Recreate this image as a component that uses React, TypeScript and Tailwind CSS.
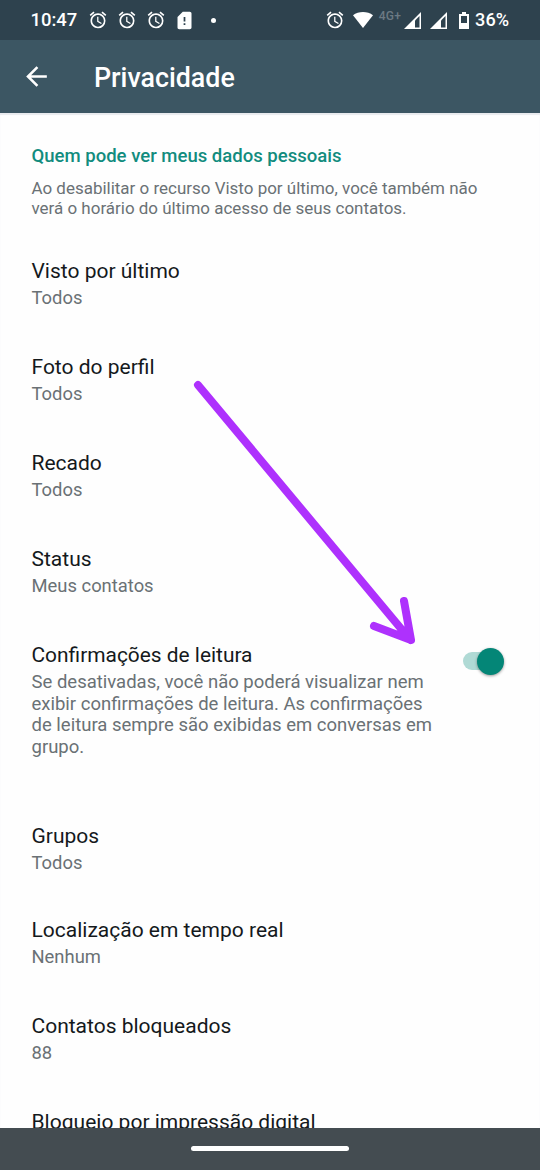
import { MdAlarm, MdArrowBack, MdSdCardAlert } from 'react-icons/md'

interface SettingItem {
  title: string
  value: string
}

const visibilityItems: SettingItem[] = [
  { title: 'Visto por último', value: 'Todos' },
  { title: 'Foto do perfil', value: 'Todos' },
  { title: 'Recado', value: 'Todos' },
  { title: 'Status', value: 'Meus contatos' }
]

const otherItems: SettingItem[] = [
  { title: 'Localização em tempo real', value: 'Nenhum' },
  { title: 'Contatos bloqueados', value: '88' }
]

function SignalIcon() {
  return (
    <svg viewBox="0 0 17 17" className="size-[17px] shrink-0">
      <path d="M0 17 17 0v17z" fill="currentColor" />
      <path d="M11 8.500 15.500 4v11.500H11z" fill="#2e424e" />
    </svg>
  )
}

function StatusBar() {
  return (
    <div className="flex h-10 shrink-0 items-center bg-[#2e424e] pr-[31px] pl-[30.5px] text-white">
      <span className="w-[57.5px] text-[18.4px] leading-5 font-medium">10:47</span>
      <div className="flex items-center gap-[9px]">
        <MdAlarm className="size-5" />
        <MdAlarm className="size-5" />
        <MdAlarm className="size-5" />
        <MdSdCardAlert className="-ml-[1px] size-[21px]" />
        <span className="ml-[7px] size-[5px] rounded-full bg-white" />
      </div>
      <div className="ml-auto flex items-center">
        <MdAlarm className="mr-2 size-5" />
        <svg viewBox="0 0 20 16" className="h-4 w-5">
          <path d="M0 3.200C5.500-1 14.500-1 20 3.200L10 16z" fill="currentColor" />
        </svg>
        <span className="mr-[3px] ml-1.5 self-start text-[12px] leading-[13px] font-medium tracking-[0.2px] text-[#6c7983]">
          4G+
        </span>
        <SignalIcon />
        <span className="w-[9px]" />
        <SignalIcon />
        <svg viewBox="0 0 10 17" className="mr-[6px] ml-3 h-[17px] w-2.5">
          <path d="M3 0h4v2h3v15H0V2h3z" fill="currentColor" />
          <path d="M2 4h6v7H2z" fill="#2e424e" />
        </svg>
        <span className="text-[18.1px] leading-5 font-medium">36%</span>
      </div>
    </div>
  )
}

function SettingRow({ title, value }: SettingItem) {
  return (
    <div className="h-24">
      <h2 className="text-[21px] leading-7 text-[#14191c]">{title}</h2>
      <p className="text-[18.4px] leading-[26px] text-[#6a7175]">{value}</p>
    </div>
  )
}

function Toggle() {
  return (
    <div role="switch" aria-checked="true" className="mt-[6.5px] flex h-[27px] w-[42px] items-center">
      <div className="flex h-[18px] w-[38px] items-center justify-end rounded-full bg-[#b0dad5]">
        <div className="-mr-[3.5px] size-[27px] shrink-0 rounded-full bg-[#048677] shadow-[0_1px_3px_rgba(0,0,0,0.4)]" />
      </div>
    </div>
  )
}

// Hand-drawn pointer from the profile photo row to the switch
function Pointer() {
  return (
    <svg viewBox="0 0 540 1170" className="pointer-events-none absolute inset-0 h-[1170px] w-[540px]">
      <path
        d="M198 385 410.500 640M404 601l7 39-37-14"
        fill="none"
        stroke="#ae31fd"
        strokeWidth="8"
        strokeLinecap="round"
        strokeLinejoin="round"
      />
    </svg>
  )
}

export default function App() {
  return (
    <div className="relative flex h-[1170px] w-[540px] flex-col overflow-hidden bg-[#fefefe] font-['Roboto',sans-serif]">
      <StatusBar />
      <header className="flex h-[73px] shrink-0 items-center bg-[#3c5663] pl-[21px] text-white">
        <MdArrowBack className="size-[31px]" />
        <h1 className="ml-[42px] pt-[2px] text-[26.8px] leading-8 font-medium">Privacidade</h1>
      </header>

      <main className="min-h-0 flex-1 overflow-hidden pl-[31.5px] shadow-[inset_0_2px_1px_#e8eaee]">
        <h2 className="mt-[31px] text-[18.55px] leading-6 font-medium text-[#128c7e]">
          Quem pode ver meus dados pessoais
        </h2>
        <p className="mt-[10px] text-[16.98px] leading-5 text-[#6a7175]">
          Ao desabilitar o recurso Visto por último, você também não
          <br />
          verá o horário do último acesso de seus contatos.
        </p>

        <div className="mt-[39px]">
          {visibilityItems.map((item) => (
            <SettingRow key={item.title} {...item} />
          ))}
        </div>

        <div className="flex h-[181px] justify-between pr-[35.5px]">
          <div>
            <h2 className="text-[20.9px] leading-7 text-[#14191c]">Confirmações de leitura</h2>
            <p className="mt-[3px] text-[18.5px] leading-[21.6px] text-[#6a7175]">
              Se desativadas, você não poderá visualizar nem
              <br />
              exibir confirmações de leitura. As confirmações
              <br />
              de leitura sempre são exibidas em conversas em
              <br />
              grupo.
            </p>
          </div>
          <Toggle />
        </div>

        <div className="h-[94px]">
          <SettingRow title="Grupos" value="Todos" />
        </div>
        {otherItems.map((item) => (
          <SettingRow key={item.title} {...item} />
        ))}
        <SettingRow title="Bloqueio por impressão digital" value="" />
      </main>

      <nav className="flex h-[42px] shrink-0 items-center justify-center bg-[#444c51] pb-[2px]">
        <span className="h-[5px] w-[158px] rounded-full bg-white" />
      </nav>
      <Pointer />
    </div>
  )
}
